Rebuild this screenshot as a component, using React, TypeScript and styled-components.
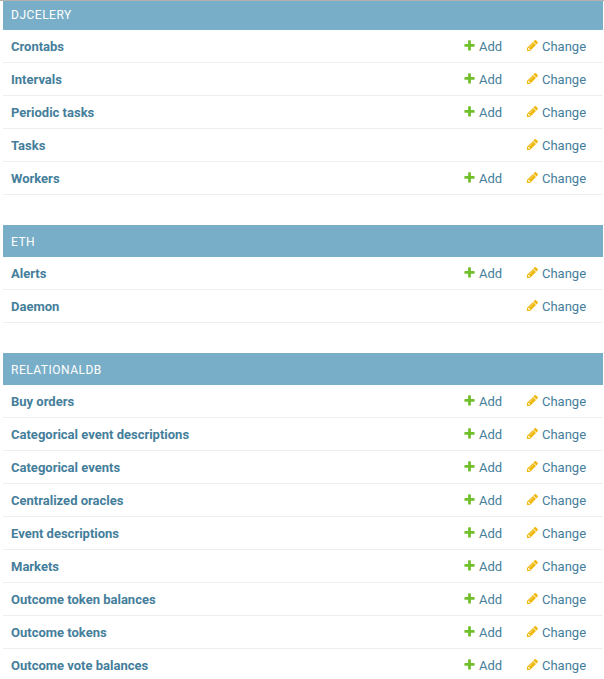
import React from "react";
import styled, { createGlobalStyle } from "styled-components";

const GlobalStyle = createGlobalStyle`
  body { margin: 0; background: #fff; font-family: Roboto, "Liberation Sans", sans-serif; font-size: 13px; overflow: hidden; }
  * { box-sizing: border-box; }
`;
const Page = styled.div`
  height: 679px;
  overflow: hidden;
  border-top: 1px solid #b5b0b0;
  padding: 0 1px 0 3px;
`;
const Module = styled.section`
  margin-bottom: 30px;
`;
const Caption = styled.h2<{ $clipped?: boolean }>`
  margin: 0;
  height: ${(p) => (p.$clipped ? 29 : 32)}px;
  padding: ${(p) => (p.$clipped ? 6 : 9)}px 8px 0;
  background: #79aec8;
  color: #fff;
  font-size: 12px;
  font-weight: 400;
  line-height: 16px;
  letter-spacing: 0.5px;
  text-transform: uppercase;
`;
const Row = styled.div`
  display: grid;
  grid-template-columns: 1fr 63px 69px;
  align-items: start;
  height: 33px;
  padding: 9px 8px 0;
  border-bottom: 1px solid #eee;
  line-height: 16px;
  color: #447e9b;
`;
const Name = styled.a`
  font-weight: 700;
`;
const Action = styled.a<{ $column: number }>`
  grid-column: ${(p) => p.$column};
  display: flex;
  gap: 3px;
`;
const Icon = styled.svg`
  flex: none;
  width: 13px;
  height: 13px;
`;

const AddIcon = () => (
  <Icon viewBox="0 0 1792 1792">
    <path fill="#70bf2b" d="M1600 796v192q0 40-28 68t-68 28h-416v416q0 40-28 68t-68 28h-192q-40 0-68-28t-28-68v-416h-416q-40 0-68-28t-28-68v-192q0-40 28-68t68-28h416v-416q0-40 28-68t68-28h192q40 0 68 28t28 68v416h416q40 0 68 28t28 68z" />
  </Icon>
);
const ChangeIcon = () => (
  <Icon viewBox="0 0 1792 1792">
    <path fill="#efb80b" d="M491 1536l91-91-235-235-91 91v107h128v128h107zm523-928q0-22-22-22-10 0-17 7l-542 542q-7 7-7 17 0 22 22 22 10 0 17-7l542-542q7-7 7-17zm-54-192l416 416-832 832h-416v-416zm683 96q0 53-37 90l-166 166-416-416 166-165q36-38 90-38 53 0 91 38l235 234q37 39 37 91z" />
  </Icon>
);

type Model = { name: string; add?: boolean };
const apps: { label: string; models: Model[] }[] = [
  { label: "djcelery", models: [{ name: "Crontabs" }, { name: "Intervals" }, { name: "Periodic tasks" }, { name: "Tasks", add: false }, { name: "Workers" }] },
  { label: "eth", models: [{ name: "Alerts" }, { name: "Daemon", add: false }] },
  { label: "relationaldb", models: ["Buy orders", "Categorical event descriptions", "Categorical events", "Centralized oracles", "Event descriptions", "Markets", "Outcome token balances", "Outcome tokens", "Outcome vote balances"].map((name) => ({ name })) },
];

export default function App() {
  return (
    <>
      <GlobalStyle />
      <Page>
        {apps.map((app, i) => (
          <Module key={app.label}>
            <Caption $clipped={i === 0}>{app.label}</Caption>
            {app.models.map((m) => (
              <Row key={m.name}>
                <Name>{m.name}</Name>
                {m.add !== false && <Action $column={2}><AddIcon />Add</Action>}
                <Action $column={3}><ChangeIcon />Change</Action>
              </Row>
            ))}
          </Module>
        ))}
      </Page>
    </>
  );
}
